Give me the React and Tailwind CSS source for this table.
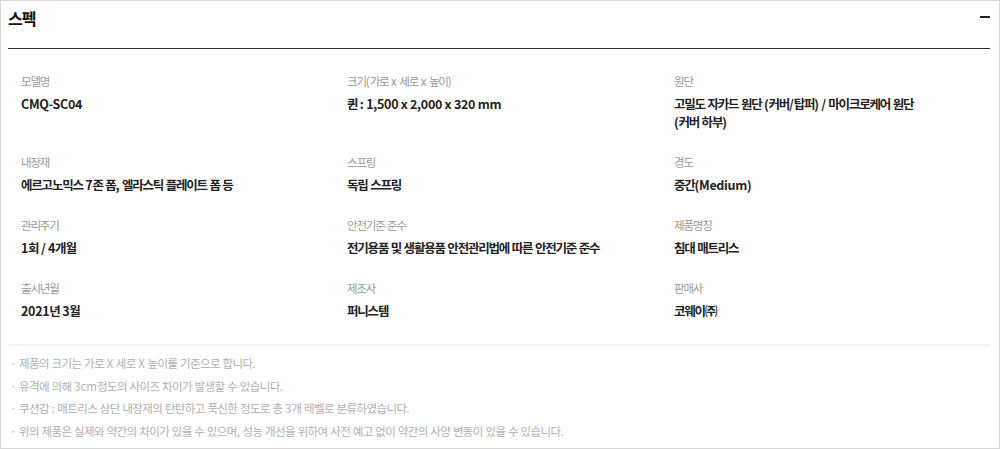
import React from 'react';

const specs = [
    { label: '모델명', value: 'CMQ-SC04' },
    { label: '크기(가로 x 세로 x 높이)', value: '퀸 : 1,500 x 2,000 x 320 mm' },
    { label: '원단', value: '고밀도 자카드 원단 (커버/탑퍼) / 마이크로케어 원단 (커버 하부)' },
    { label: '내장재', value: '에르고노믹스 7존 폼, 엘라스틱 플레이트 폼 등' },
    { label: '스프링', value: '독립 스프링' },
    { label: '경도', value: '중간(Medium)' },
    { label: '관리주기', value: '1회 / 4개월' },
    { label: '안전기준 준수', value: '전기용품 및 생활용품 안전관리법에 따른 안전기준 준수' },
    { label: '제품명칭', value: '침대 매트리스' },
    { label: '출시년월', value: '2021년 3월' },
    { label: '제조사', value: '퍼니스템' },
    { label: '판매사', value: '코웨이㈜' },
];

const notes = [
    '제품의 크기는 가로 X 세로 X 높이를 기준으로 합니다.',
    '유격에 의해 3cm정도의 사이즈 차이가 발생할 수 있습니다.',
    '쿠션감 : 매트리스 상단 내장재의 탄탄하고 푹신한 정도로 총 3개 레벨로 분류하였습니다.',
    '위의 제품은 실제와 약간의 차이가 있을 수 있으며, 성능 개선을 위하여 사전 예고 없이 약간의 사양 변동이 있을 수 있습니다.',
];

// hangul runs get tighter spacing than latin / digits
const Txt = ({ text, hangul }) =>
    text.split(/([\uAC00-\uD7A3]+)/).map((part, i) =>
        /[\uAC00-\uD7A3]/.test(part) ? <span key={i} className={hangul}>{part}</span> : <React.Fragment key={i}>{part}</React.Fragment>
    );

const SpecItem = ({ label, value }) => (
    <div>
        <div className="text-[11.5px] leading-[18px] text-[#999]">
            <Txt text={label} hangul="tracking-[-1.2px]" />
        </div>
        <div className="mt-[5px] text-[12.5px] leading-[18px] font-bold text-[#222] tracking-[-0.3px] max-w-[255px] break-keep">
            <Txt text={value} hangul="tracking-[-1.2px]" />
        </div>
    </div>
);

export default function App() {
    return (
        <div
            className="w-[1000px] h-[449px] border border-[#d8d8d8] bg-white pl-[7px] pr-[9px] overflow-hidden"
            style={{ fontFamily: '"Noto Sans CJK KR", "Noto Sans", sans-serif' }}
        >
            <div className="h-[48px] flex justify-between items-start pt-[7px] border-b border-[#333]">
                <h2 className="text-[16px] leading-[20px] font-bold text-[#111] tracking-[-1px]">스펙</h2>
                <div className="w-[10px] h-[2px] bg-[#222] mt-[8px]" />
            </div>

            <div className="grid grid-cols-[326px_327px_1fr] gap-y-[22px] pl-[13px] pt-[23px]">
                {specs.map(s => (
                    <SpecItem key={s.label} label={s.label} value={s.value} />
                ))}
            </div>

            <div className="mt-[24px] h-[2px] bg-[#f3f3f3]" />

            <ul className="pt-[6px] pl-[2px]">
                {notes.map(n => (
                    <li key={n} className="text-[11.5px] leading-[22.7px] text-[#b0b0b0]">
                        · <Txt text={n} hangul="tracking-[-0.6px]" />
                    </li>
                ))}
            </ul>
        </div>
    );
}
